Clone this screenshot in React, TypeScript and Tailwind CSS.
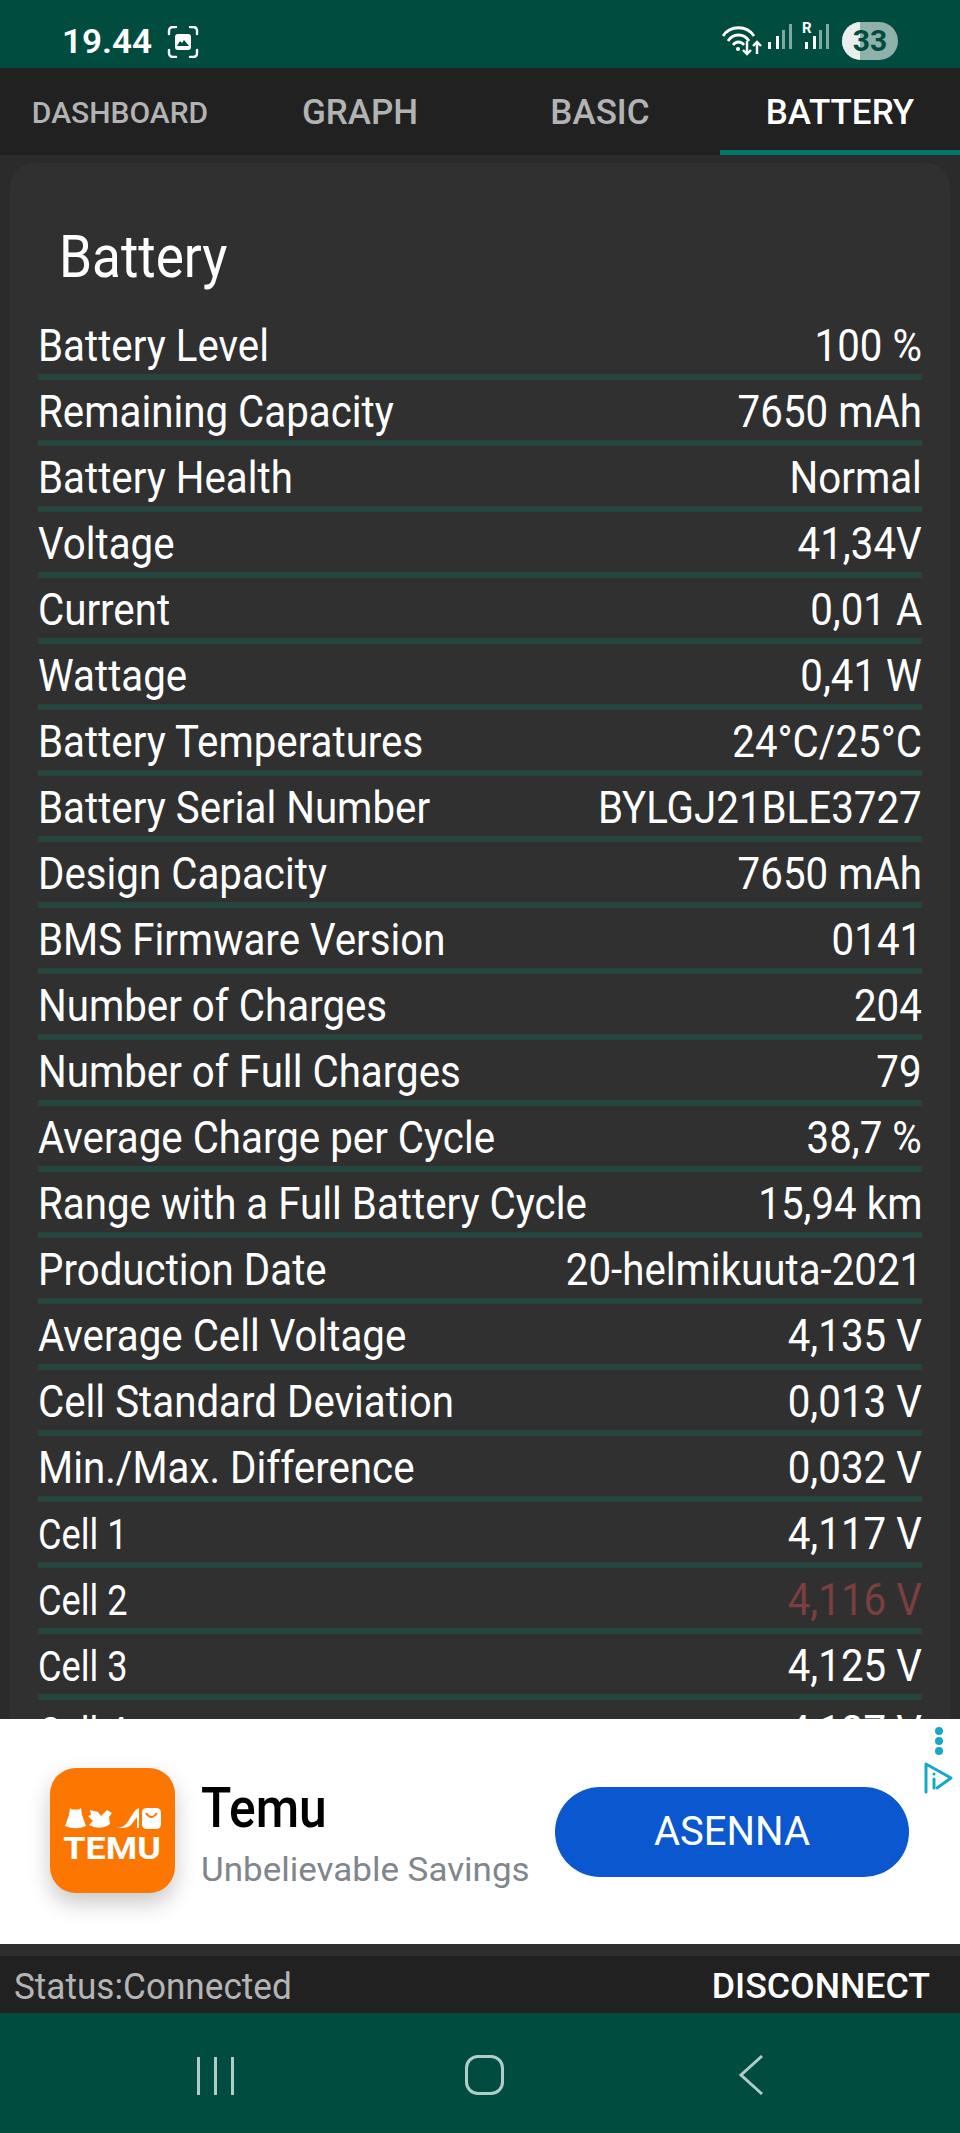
const rows = [
  ["Battery Level", "100 %"],
  ["Remaining Capacity", "7650 mAh"],
  ["Battery Health", "Normal"],
  ["Voltage", "41,34V"],
  ["Current", "0,01 A"],
  ["Wattage", "0,41 W"],
  ["Battery Temperatures", "24°C/25°C"],
  ["Battery Serial Number", "BYLGJ21BLE3727"],
  ["Design Capacity", "7650 mAh"],
  ["BMS Firmware Version", "0141"],
  ["Number of Charges", "204"],
  ["Number of Full Charges", "79"],
  ["Average Charge per Cycle", "38,7 %"],
  ["Range with a Full Battery Cycle", "15,94 km"],
  ["Production Date", "20-helmikuuta-2021"],
  ["Average Cell Voltage", "4,135 V"],
  ["Cell Standard Deviation", "0,013 V"],
  ["Min./Max. Difference", "0,032 V"],
  ["Cell 1", "4,117 V"],
  ["Cell 2", "4,116 V"],
  ["Cell 3", "4,125 V"],
  ["Cell 4", "4,127 V"],
];

function StatusBar() {
  return (
    <div className="h-[68px] shrink-0 bg-[#004d40] flex items-center pl-[62px] pr-[62px] text-white">
      <span className="text-[34px] font-semibold leading-none inline-block w-[89px] mt-[14px] scale-x-[1.03] origin-left">19.44</span>
      {/* Screenshot icon */}
      <svg width="32" height="32" viewBox="0 0 32 32" fill="none" stroke="#fff" strokeWidth="2.4" strokeLinecap="round" className="ml-[16px] mt-[15px]">
        <path d="M2 8V5q0-4 4-4h3M23 1h3q4 0 4 4v3M30 24v3q0 4-4 4h-3M9 31H6q-4 0-4-4v-3" />
        <rect x="8" y="8" width="16" height="16" rx="3" fill="#fff" stroke="none" />
        <path d="M10 20l3-5 2 2 2-3 5 6z" fill="#004d40" stroke="none" />
      </svg>
      <div className="ml-auto flex items-center">
        {/* Wifi with arrows */}
        <svg width="42" height="32" viewBox="0 0 42 32" fill="none" stroke="#fff" strokeWidth="2.8" className="mt-[13px]">
          <path d="M1 11C8 0 25 0 32 11" />
          <path d="M6 16c5-8 16-8 21 0" />
          <path d="M11 20c3-4 8-4 11 0" />
          <circle cx="16" cy="24" r="2" fill="#fff" stroke="none" />
          <path d="M25 16v13M21 25l4 4 4-4" strokeWidth="2.4" />
          <path d="M35 29V17M31 21l4-4 4 4" strokeWidth="2.4" />
        </svg>
        {/* Signal 1 */}
        <svg width="24" height="28" viewBox="0 0 24 28" className="ml-[4px] mt-[6px]">
          <rect x="0" y="19" width="3" height="7" fill="#fff" />
          <rect x="8" y="13" width="3" height="13" fill="#fff" />
          <rect x="14" y="7" width="3" height="19" fill="#7fa8a0" />
          <rect x="21" y="1" width="3" height="25" fill="#7fa8a0" />
        </svg>
        {/* Signal 2 with roaming R */}
        <div className="relative ml-[13px] w-[24px] h-[28px] mt-[6px]">
          <span className="absolute left-[-3px] top-[-2px] text-[15px] leading-none font-bold text-white">R</span>
          <svg width="24" height="28" viewBox="0 0 24 28">
            <rect x="0" y="19" width="3" height="7" fill="#fff" />
            <rect x="8" y="13" width="3" height="13" fill="#fff" />
            <rect x="14" y="7" width="3" height="19" fill="#7fa8a0" />
            <rect x="21" y="1" width="3" height="25" fill="#7fa8a0" />
          </svg>
        </div>
        {/* Battery pill */}
        <div className="ml-[13px] w-[56px] h-[38px] rounded-full bg-[#8fb1aa] overflow-hidden relative flex items-center justify-center mt-[14px]">
          <div className="absolute left-0 top-0 bottom-0 w-[18px] bg-[#e8efed]" />
          <span className="relative text-[#004d40] text-[30px] font-bold leading-none">33</span>
        </div>
      </div>
    </div>
  );
}

function Tabs() {
  return (
    <div className="h-[87px] shrink-0 bg-[#212121] grid grid-cols-4 text-[#b3b3b3] font-medium">
      <div className="flex items-center justify-center pt-[2px]">
        <span className="text-[30px] leading-none">DASHBOARD</span>
      </div>
      <div className="flex items-center justify-center pt-[2px]">
        <span className="text-[35px] leading-none">GRAPH</span>
      </div>
      <div className="flex items-center justify-center pt-[2px]">
        <span className="text-[35px] leading-none">BASIC</span>
      </div>
      <div className="flex items-center justify-center pt-[7px] border-b-[5px] border-[#00796b] text-white">
        <span className="text-[35px] leading-none">BATTERY</span>
      </div>
    </div>
  );
}

function Row({ label, value }: { label: string; value: string }) {
  const isCell = label.startsWith("Cell ") && label.length === 6;
  return (
    <div className="h-[66px] pt-[9px] flex justify-between items-baseline border-b-[6px] border-[#25463f] whitespace-nowrap text-white">
      <span className={isCell ? "text-[42px] leading-none scale-x-[0.86] origin-left inline-block" : "text-[45px] leading-none scale-x-[0.895] origin-left inline-block"}>{label}</span>
      <span className={value === "4,116 V" ? "text-[45px] leading-none scale-x-[0.895] origin-right inline-block text-[#7a3f3e]" : "text-[45px] leading-none scale-x-[0.895] origin-right inline-block"}>{value}</span>
    </div>
  );
}

function TemuLogo() {
  return (
    <div className="w-[125px] h-[125px] rounded-[26px] bg-[#fb7701] shadow-[0_10px_22px_rgba(0,0,0,0.22)] flex flex-col items-center justify-center shrink-0">
      <svg width="96" height="21" viewBox="0 0 96 21" fill="#fff" className="mt-[12px]">
        {/* dress */}
        <path d="M5 0l2 1.500h7L16 0l1 7 4 11q-10 4.500-21 0L4 7z" />
        {/* rocking horse */}
        <path d="M25 2l8 2 3 4 6-6 5 3-3 4 1 7-3 2q-9 4-18-1l4-4-5-5 3-1z" />
        {/* heel */}
        <path d="M51 20q7 0 11-5l7-11q2-3 5-4v20h-2V9l-6 8q-3 3-7 3z" />
        {/* bag */}
        <path d="M77 5q0-5 5-5h9q5 0 5 5v11q0 5-5 5h-9q-5 0-5-5z" />
        <path d="M81 5q5 8 11 0" fill="none" stroke="#fb7701" strokeWidth="2" />
      </svg>
      <span className="text-white font-bold text-[31px] leading-none scale-x-[1.16] mt-[4px] mb-[2px]">TEMU</span>
    </div>
  );
}

function Ad() {
  return (
    <div className="relative h-[225px] shrink-0 bg-white flex items-center pl-[50px] pr-[51px]">
      <div className="flex items-center mt-[-2px]">
        <TemuLogo />
        <div className="ml-[26px] w-[354px] pt-[5px]">
          <div className="text-black text-[55px] leading-none font-medium scale-x-[0.905] origin-left">Temu</div>
          <div className="text-[#80868b] text-[33px] leading-none mt-[17px] scale-x-[1.06] origin-left whitespace-nowrap">Unbelievable Savings</div>
        </div>
      </div>
      <div className="ml-auto w-[354px] h-[90px] rounded-full bg-[#0b57d0] text-white flex items-center justify-center">
        <span className="text-[40px] leading-none">ASENNA</span>
      </div>
      {/* Menu dots and ad choices */}
      <div className="absolute right-[17px] top-[8px] flex flex-col gap-[2px]">
        <div className="w-[8px] h-[8px] rounded-full bg-[#16a9c7]" />
        <div className="w-[8px] h-[8px] rounded-full bg-[#16a9c7]" />
        <div className="w-[8px] h-[8px] rounded-full bg-[#16a9c7]" />
      </div>
      <svg width="30" height="32" viewBox="0 0 30 32" fill="none" stroke="#16a9c7" strokeWidth="3" strokeLinecap="round" strokeLinejoin="round" className="absolute right-[7px] top-[43px]">
        <path d="M3 30V2l25 14-14 10" />
        <path d="M11 17v9" />
        <circle cx="11" cy="12" r="0.8" fill="#16a9c7" strokeWidth="1.5" />
      </svg>
    </div>
  );
}

export default function App() {
  return (
    <div className="w-[960px] h-[2133px] flex flex-col bg-[#2b2b2b] font-['Roboto',sans-serif] overflow-hidden">
      <StatusBar />
      <Tabs />
      <div className="flex-1 min-h-0 overflow-hidden pt-[8px] px-[10px]">
        <div className="bg-[#303030] rounded-t-[24px] pl-[28px] pb-[20px] pr-[28px]">
          <div className="h-[151px] pl-[21px] pt-[64px]">
            <span className="text-white text-[59px] leading-none scale-x-[0.9] origin-left inline-block">Battery</span>
          </div>
          {rows.map((r) => (
            <Row key={r[0]} label={r[0]} value={r[1]} />
          ))}
        </div>
      </div>
      <Ad />
      <div className="h-[12px] shrink-0 bg-[#2e2e2e]" />
      <div className="h-[57px] shrink-0 bg-[#212121] flex items-center justify-between pl-[14px] pr-[30px] pt-[3px] whitespace-nowrap">
        <span className="text-[#b5b5b5] text-[37px] leading-none scale-x-[0.95] origin-left inline-block">Status:Connected</span>
        <span className="text-white text-[35px] leading-none font-medium scale-x-[1.02] origin-right inline-block">DISCONNECT</span>
      </div>
      {/* Android nav bar */}
      <div className="h-[120px] shrink-0 bg-[#004d40] flex items-start">
        <div className="ml-[197px] mt-[44px] flex gap-[14px]">
          <div className="w-[3px] h-[38px] bg-[#b2cdc7]" />
          <div className="w-[3px] h-[38px] bg-[#b2cdc7]" />
          <div className="w-[3px] h-[38px] bg-[#b2cdc7]" />
        </div>
        <div className="ml-[231px] mt-[42px] w-[39px] h-[40px] rounded-[13px] border-[3px] border-[#b2cdc7]" />
        <svg width="26" height="42" viewBox="0 0 26 42" fill="none" stroke="#b2cdc7" strokeWidth="3" className="ml-[234px] mt-[41px]">
          <path d="M24 2L3 21l21 19" />
        </svg>
      </div>
    </div>
  );
}
